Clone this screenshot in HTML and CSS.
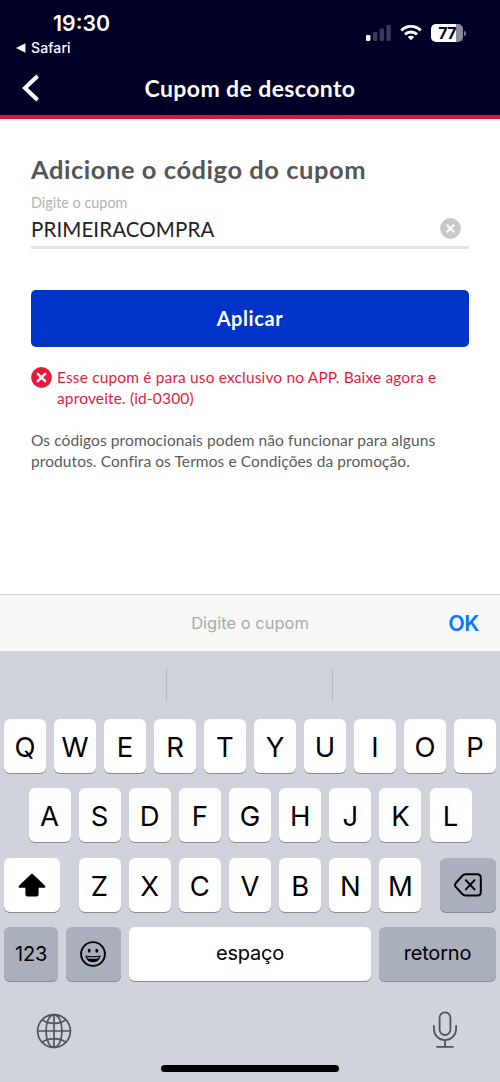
FILE: index.html
```html
<!DOCTYPE html>
<html lang="pt-BR">
<head>
    <meta charset="UTF-8">
    <meta name="viewport" content="width=device-width, initial-scale=1.0">
    <title>Cupom de desconto</title>
    <link rel="stylesheet" href="styles.css">
</head>
<body>
    <!-- Header Section -->
    <header>
        <div class="status-bar">
            <div class="status-left">
                <div class="time">19:30</div>
                <div class="back-app">
                    <svg width="10" height="10" viewBox="0 0 10 10"><path d="M0 5L9.4 0.3v9.4z" fill="#fff"/></svg>
                    <span>Safari</span>
                </div>
            </div>
            <div class="status-icons">
                <svg class="signal" width="26" height="18" viewBox="0 0 26 18" fill="#383857">
                    <rect x="0" y="11" width="4.4" height="6" rx="1.2" fill="#fff"/>
                    <rect x="7" y="8" width="4.4" height="9" rx="1.2"/>
                    <rect x="13.7" y="4.5" width="4.4" height="12.5" rx="1.2"/>
                    <rect x="20.4" y="1" width="4.4" height="16" rx="1.2"/>
                </svg>
                <svg class="wifi" width="22" height="17" viewBox="0 0 22 17" fill="none" stroke="#fff" stroke-width="2.9">
                    <path d="M1.3 6.4a13.8 13.8 0 0 1 19.4 0"/>
                    <path d="M5 10.4a8.6 8.6 0 0 1 12 0"/>
                    <path d="M11 16.2L7.8 13a4.6 4.6 0 0 1 6.4 0z" fill="#fff" stroke="none"/>
                </svg>
                <div class="battery"><span>77</span></div>
                <div class="battery-tip"></div>
            </div>
        </div>
        <div class="title-bar">
            <svg class="back" width="18" height="28" viewBox="0 0 18 28"><path d="M16.6 2L4 14l12.6 12" fill="none" stroke="#fff" stroke-width="4"/></svg>
            <h1>Cupom de desconto</h1>
        </div>
    </header>

    <!-- Coupon Form -->
    <main>
        <h2>Adicione o código do cupom</h2>
        <div class="field">
            <div class="label">Digite o cupom</div>
            <div class="field-row">
                <span class="value">PRIMEIRACOMPRA</span>
                <svg class="clear" width="21" height="21" viewBox="0 0 21 21"><circle cx="10.5" cy="10.5" r="10.4" fill="#c9c9c9"/><path d="M6.7 6.7l7.6 7.6M14.3 6.7l-7.6 7.6" stroke="#fff" stroke-width="2"/></svg>
            </div>
        </div>
        <button class="apply">Aplicar</button>
        <div class="error">
            <svg width="21" height="21" viewBox="0 0 21 21"><circle cx="10.5" cy="10.5" r="10.4" fill="#e71a3b"/><path d="M6.8 6.8l7.4 7.4M14.2 6.8l-7.4 7.4" stroke="#fff" stroke-width="2.4" stroke-linecap="round"/></svg>
            <p>Esse cupom é para uso exclusivo no APP. Baixe agora e<br>aproveite. (id-0300)</p>
        </div>
        <p class="terms">Os códigos promocionais podem não funcionar para alguns<br>produtos. Confira os Termos e Condições da promoção.</p>
    </main>

    <!-- Input Toolbar -->
    <div class="toolbar">
        <span class="hint">Digite o cupom</span>
        <span class="ok">OK</span>
    </div>

    <!-- Keyboard -->
    <div class="keyboard">
        <div class="suggestions"><div></div><div></div><div></div></div>
        <div class="row">
            <div class="key">Q</div><div class="key">W</div><div class="key">E</div><div class="key">R</div><div class="key">T</div><div class="key">Y</div><div class="key">U</div><div class="key">I</div><div class="key">O</div><div class="key">P</div>
        </div>
        <div class="row row-middle">
            <div class="key">A</div><div class="key">S</div><div class="key">D</div><div class="key">F</div><div class="key">G</div><div class="key">H</div><div class="key">J</div><div class="key">K</div><div class="key">L</div>
        </div>
        <div class="row row-bottom">
            <div class="key shift">
                <svg width="28" height="24" viewBox="0 0 28 24"><path d="M13.2 1.1Q14 .4 14.8 1.1L26.8 12.5Q28.2 14.7 26 14.8H20.6V21.5Q20.6 23.5 18.6 23.5H9.4Q7.4 23.5 7.4 21.5V14.8H2Q-.2 14.7 1.2 12.5Z"/></svg>
            </div>
            <div class="letters">
                <div class="key">Z</div><div class="key">X</div><div class="key">C</div><div class="key">V</div><div class="key">B</div><div class="key">N</div><div class="key">M</div>
            </div>
            <div class="key dark delete">
                <svg width="28" height="24" viewBox="0 0 28 24" fill="none" stroke="#000" stroke-width="2" stroke-linecap="round" stroke-linejoin="round"><path d="M11.5 1.2H23.3Q26.8 1.2 26.8 4.7V19Q26.8 22.5 23.3 22.5H11.5Q9.8 22.5 8.6 21.3L1.8 13.8Q.3 11.9 1.8 10L8.6 2.5Q9.8 1.2 11.5 1.2ZM11.9 7.3l8.6 9.1M20.5 7.3l-8.6 9.1"/></svg>
            </div>
        </div>
        <div class="row row-actions">
            <div class="key dark numbers">123</div>
            <div class="key dark emoji">
                <svg width="26" height="26" viewBox="0 0 26 26"><circle cx="13" cy="13" r="11.9" fill="none" stroke="#000" stroke-width="1.9"/><ellipse cx="9.2" cy="9.8" rx="1.45" ry="2"/><ellipse cx="16.8" cy="9.8" rx="1.45" ry="2"/><path d="M5.2 14.6Q13 16.1 20.8 14.6Q19.4 21.3 13 21.3T5.2 14.6Z"/><path d="M7 15.8Q13 16.9 19 15.8L18.4 17.2Q13 18.3 7.6 17.2Z" fill="#a9afbc"/></svg>
            </div>
            <div class="key space">espaço</div>
            <div class="key dark return">retorno</div>
        </div>
        <div class="bottom-icons">
            <svg width="36" height="36" viewBox="0 0 36 36" fill="none" stroke="#50545d" stroke-width="1.7"><circle cx="18" cy="18" r="16.4"/><ellipse cx="18" cy="18" rx="8" ry="16.4"/><path d="M18 1.6v32.8M1.6 18h32.8M6 6.7q4.8 3.7 12 3.7t12-3.7M6 29.3q4.8-3.7 12-3.7t12 3.7"/></svg>
            <svg class="mic" width="26" height="38" viewBox="0 0 26 38" fill="none" stroke="#50545d" stroke-width="1.8" stroke-linecap="round"><rect x="7.6" y="1.4" width="10.8" height="22.6" rx="5.4"/><path d="M1.9 15v3a11.1 11.1 0 0 0 22.2 0v-3M13 29.2v6.4M5 35.8h16"/></svg>
        </div>
        <div class="home-bar"></div>
    </div>
</body>
</html>
```
FILE: styles.css
```css
* {
    box-sizing: border-box;
}
body {
    margin: 0;
    width: 500px;
    height: 1082px;
    display: flex;
    flex-direction: column;
    overflow: hidden;
    background-color: #fff;
    font-family: Lato, sans-serif;
}
h1, h2, p {
    margin: 0;
}
svg {
    display: block;
    flex: none;
}
header {
    height: 119px;
    background-color: #000027;
    border-bottom: 4px solid #e3122f;
    color: #fff;
}
.status-bar {
    height: 62px;
    display: flex;
    justify-content: space-between;
    font-family: Inter, sans-serif;
}
.status-left {
    padding: 10px 0 0 16px;
}
.time {
    padding-left: 37px;
    font-size: 21.3px;
    line-height: 27px;
    font-weight: 600;
}
.back-app {
    display: flex;
    align-items: center;
    gap: 5px;
    font-size: 14px;
    line-height: 22px;
    font-weight: 500;
    letter-spacing: 0.1px;
}
.status-icons {
    display: flex;
    align-items: flex-start;
    padding: 24px 34px 0 0;
}
.wifi {
    margin-left: 8px;
}
.battery {
    width: 32px;
    height: 18px;
    margin-left: 9px;
    border-radius: 5px;
    background: linear-gradient(to right, #fff 25px, #8a8a9d 25px);
    color: #000027;
    font-size: 16px;
    line-height: 18px;
    font-weight: 700;
    text-align: center;
    letter-spacing: -0.6px;
}
.battery-tip {
    width: 2px;
    height: 5px;
    margin: 7px 0 0 1px;
    border-radius: 0 2px 2px 0;
    background-color: #77778b;
}
.title-bar {
    height: 51px;
    display: flex;
    align-items: center;
    padding-left: 21px;
}
h1 {
    flex: 1;
    padding-right: 39px;
    text-align: center;
    font-size: 23px;
    line-height: 30px;
    font-weight: 700;
    letter-spacing: 0.4px;
}
main {
    height: 475px;
    padding: 34px 31px 0;
}
h2 {
    font-size: 25.5px;
    line-height: 32px;
    font-weight: 700;
    letter-spacing: 0.54px;
    color: #555;
    white-space: nowrap;
}
.field {
    height: 64px;
    border-bottom: 3px solid #e3e3e3;
    padding-top: 8px;
}
.label {
    font-size: 14.4px;
    line-height: 20px;
    color: #b3b3b3;
}
.field-row {
    display: flex;
    align-items: center;
    justify-content: space-between;
    height: 31px;
    padding-right: 8px;
}
.value {
    font-size: 20.5px;
    line-height: 28px;
    letter-spacing: 0.12px;
    color: #222;
}
.apply {
    display: block;
    width: 438px;
    height: 57px;
    margin-top: 41px;
    padding: 0 0 1px;
    border: none;
    border-radius: 5px;
    background-color: #0033c8;
    color: #fff;
    font-family: Lato, sans-serif;
    font-size: 20px;
    font-weight: 700;
    letter-spacing: 0.6px;
}
.error {
    display: flex;
    gap: 5px;
    margin-top: 20px;
    font-size: 15.5px;
    line-height: 21px;
    letter-spacing: 0.15px;
    color: #e71a3b;
    white-space: nowrap;
}
.terms {
    margin-top: 21px;
    font-size: 15.5px;
    line-height: 21px;
    letter-spacing: 0.09px;
    color: #5a5a5a;
    white-space: nowrap;
}
.toolbar {
    height: 57px;
    display: grid;
    grid-template-columns: 1fr auto 1fr;
    align-items: center;
    padding: 0 21px;
    border-top: 1px solid #d3d3d5;
    background-color: #f7f7f7;
    font-family: Inter, sans-serif;
}
.hint {
    grid-column: 2;
    font-size: 16.5px;
    color: #aaa;
}
.ok {
    justify-self: end;
    font-size: 21.5px;
    font-weight: 600;
    letter-spacing: -0.4px;
    color: #007aff;
}
.keyboard {
    height: 431px;
    padding: 0 4px;
    background-color: #d0d3db;
    font-family: Inter, sans-serif;
    color: #000;
}
.suggestions {
    height: 68px;
    padding: 17px 0;
    margin: 0 -3px 0 -5px;
    display: grid;
    grid-template-columns: repeat(3, 1fr);
}
.suggestions div + div {
    border-left: 1px solid #b9bbc1;
}
.row {
    height: 54px;
    display: flex;
    justify-content: space-between;
    margin-bottom: 15.3px;
}
.row-middle {
    padding: 0 24.5px;
}
.key {
    width: 42px;
    height: 54px;
    display: flex;
    align-items: center;
    justify-content: center;
    border-radius: 6px;
    background-color: #fff;
    box-shadow: 0 1px 0 #898a8d;
    font-size: 27.5px;
    line-height: 34px;
    padding-top: 2px;
}
.dark {
    background-color: #a9afbc;
}
.shift, .delete {
    width: 56.4px;
    padding-top: 0;
}
.letters {
    width: 343px;
    display: flex;
    justify-content: space-between;
}
.row-actions .key {
    font-size: 20px;
    letter-spacing: -0.2px;
    padding-top: 0;
}
.row-actions .numbers {
    width: 54px;
}
.row-actions .emoji {
    width: 55px;
    padding-right: 1px;
}
.row-actions .space {
    width: 242px;
    padding-bottom: 2px;
}
.row-actions .return {
    width: 117px;
    padding-bottom: 2px;
}
.bottom-icons {
    display: flex;
    justify-content: space-between;
    padding: 17px 38px 0 32px;
    height: 69px;
}
.mic {
    margin-top: -2px;
}
.home-bar {
    width: 178px;
    height: 7px;
    margin: 0 auto;
    border-radius: 4px;
    background-color: #000;
}
```
